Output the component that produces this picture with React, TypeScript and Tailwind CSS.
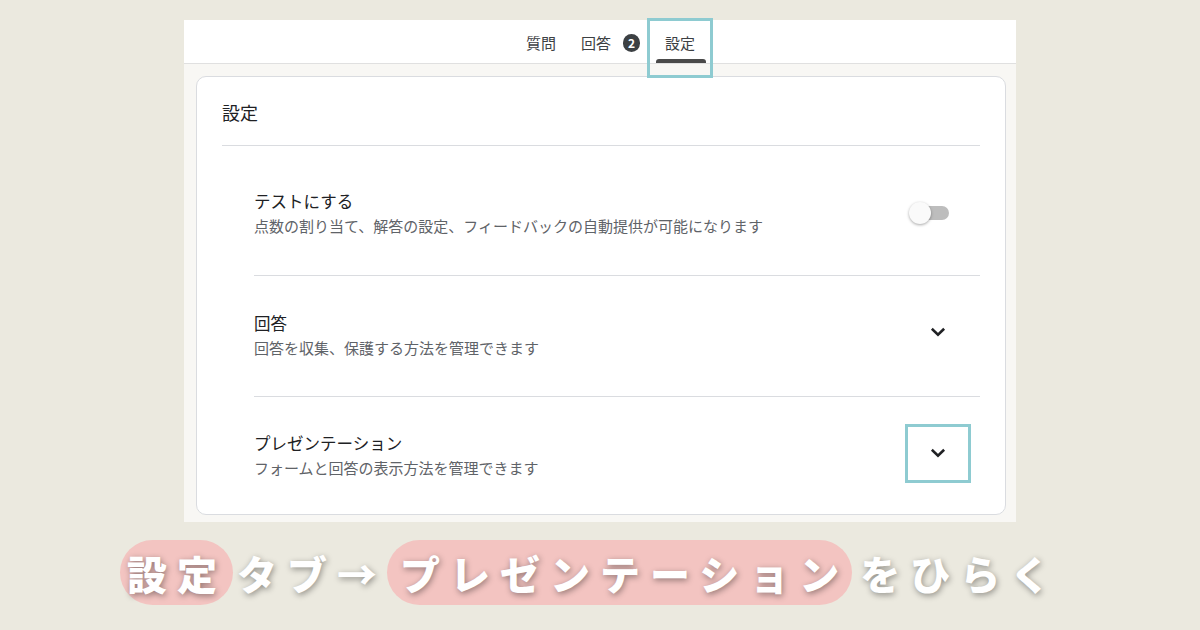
import React from 'react';

const Chevron: React.FC = () => (
  <svg width="24" height="24" viewBox="0 0 24 24" fill="none" className="stroke-[#202124]">
    <path d="M6.8 9.6L12 14.6l5.2-5" strokeWidth="2.6" strokeLinecap="square" />
  </svg>
);

const Toggle: React.FC = () => (
  <div className="relative w-[40px] h-[24px] flex items-center mr-[31px]">
    <div className="ml-[8px] w-[32px] h-[14px] rounded-full bg-[#bdbdbd]" />
    <div className="absolute left-0 top-[1px] w-[22px] h-[22px] rounded-full bg-[#fafafa] shadow-[0_1px_3px_rgba(0,0,0,0.35)]" />
  </div>
);

interface RowProps {
  title: string;
  desc: string;
  pad: string;
  right: React.ReactNode;
}

const SettingRow: React.FC<RowProps> = ({ title, desc, pad, right }) => (
  <div className={`flex items-center justify-between ${pad}`}>
    <div className="flex flex-col">
      <div className="text-[16.5px] leading-[22px] text-[#202124]">{title}</div>
      <div className="mt-[4px] text-[15px] leading-[20px] text-[#5f6368]">{desc}</div>
    </div>
    {right}
  </div>
);

const Tab: React.FC<{ label: string; active?: boolean; badge?: string }> = ({ label, active, badge }) => (
  <div className="relative flex flex-col h-full px-[10px]">
    <div className="flex items-center gap-[12px] pt-[13px]">
      <span className="text-[15px] leading-[20px] text-[#3c4043]">{label}</span>
      {badge && (
        <span className="w-[17px] h-[18px] rounded-full bg-[#3c4043] text-white text-[12px] font-bold flex items-center justify-center leading-none">
          {badge}
        </span>
      )}
    </div>
    <div className={`mt-auto ml-[-9px] mr-[-11px] h-[4px] rounded-t-[3px] ${active ? 'bg-[#4a4a4a]' : 'bg-transparent'}`} />
    {active && (
      <div className="absolute left-[-8px] right-[-8px] top-[-2px] bottom-[-15px] border-[3px] border-[#8ecbd1]" />
    )}
  </div>
);

const App: React.FC = () => {
  return (
    <div className="w-[1200px] h-[630px] bg-[#ebe9df] flex flex-col font-['Noto_Sans_CJK_JP',sans-serif] overflow-hidden">
      <div className="shrink-0 ml-[184px] mt-[20px] w-[832px] h-[502px] bg-[#f8f7f4] flex flex-col">
        <div className="shrink-0 h-[44px] bg-white border-b border-[#e0e0e0] flex pl-[332px] gap-[5px]">
          <Tab label="質問" />
          <Tab label="回答" badge="2" />
          <Tab label="設定" active />
        </div>
        <div className="shrink-0 mt-[12px] ml-[12px] mr-[10px] bg-white border border-[#dadce0] rounded-[10px] flex flex-col px-[25px]">
          <div className="pt-[23px] pb-[21px] text-[18px] leading-[24px] text-[#202124] border-b border-[#dadce0]">
            設定
          </div>
          <div className="ml-[32px] flex flex-col">
            <SettingRow
              title="テストにする"
              desc="点数の割り当て、解答の設定、フィードバックの自動提供が可能になります"
              pad="pt-[44px] pb-[39px] border-b border-[#dadce0]"
              right={<Toggle />}
            />
            <SettingRow
              title="回答"
              desc="回答を収集、保護する方法を管理できます"
              pad="pt-[36px] pb-[38px] border-b border-[#dadce0]"
              right={
                <div className="w-[48px] h-[48px] mr-[18px] -mt-[6px] flex items-center justify-center">
                  <Chevron />
                </div>
              }
            />
            <SettingRow
              title="プレゼンテーション"
              desc="フォームと回答の表示方法を管理できます"
              pad="pt-[35px] pb-[36px]"
              right={
                <div className="relative w-[48px] h-[48px] mr-[18px] -mt-[4px] flex items-center justify-center">
                  <Chevron />
                  <div className="absolute left-[-9px] right-[-9px] top-[-5px] bottom-[-6px] border-[3px] border-[#8ecbd1]" />
                </div>
              }
            />
          </div>
        </div>
      </div>
      <div className="mt-[18px] pl-[120px] flex items-center text-white font-black text-[40px] leading-none tracking-[10px] [text-shadow:1px_2px_6px_rgba(0,0,0,0.4)]">
        <span className="h-[65px] flex items-center rounded-full bg-[#f3c4c1] pl-[7px] pr-[6px]">設定</span>
        <span className="ml-[4px]">タブ→</span>
        <span className="h-[65px] flex items-center rounded-full bg-[#f3c4c1] pl-[13px] pr-[3px]">プレゼンテーション</span>
        <span className="ml-[8px]">をひらく</span>
      </div>
    </div>
  );
};

export default App;
